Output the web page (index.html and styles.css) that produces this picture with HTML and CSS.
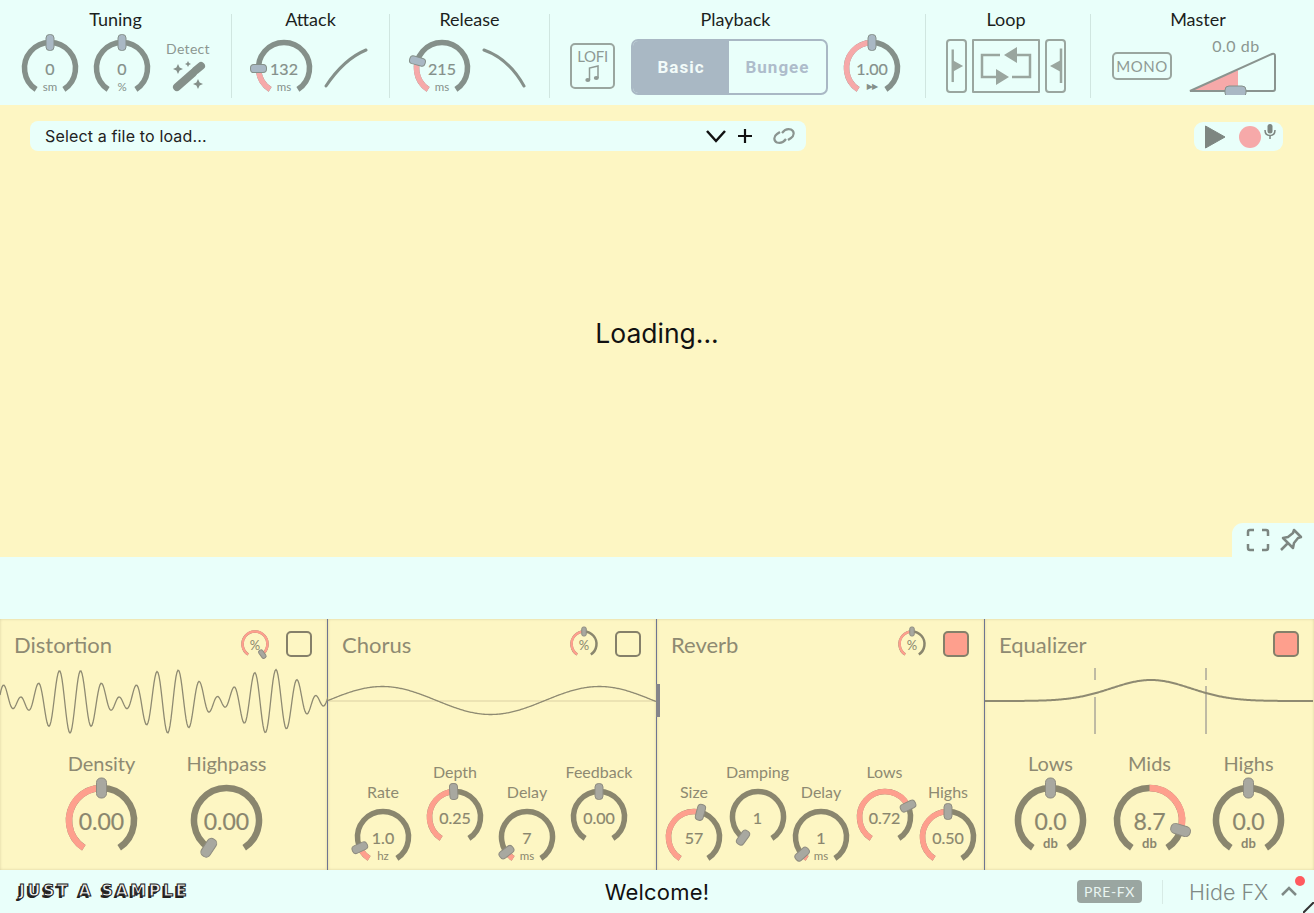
FILE: index.html
```html
<!DOCTYPE html>
<html>

<head>
    <title>Sampler</title>
    <link rel="stylesheet" href="styles.css">
</head>

<body>
    <div id="header">
        <div class="section tuning">
            <div class="section-title">Tuning</div>
            <div class="controls">
                <div class="knob sm" data-value="0" data-unit="sm" data-pos="0.5" data-from="0.5"></div>
                <div class="knob sm" data-value="0" data-unit="%" data-pos="0.5" data-from="0.5"></div>
                <div class="detect">
                    <div class="detect-label">Detect</div>
                    <svg width="36" height="32" viewBox="0 0 36 32">
                        <path d="M7 27 L23 13" class="wand" />
                        <path d="M25.500 10.500 L31 6" class="wand" />
                        <path class="star" d="M8 4 L9.600 7.400 L13 9 L9.600 10.600 L8 14 L6.400 10.600 L3 9 L6.400 7.400 Z" />
                        <path class="star" d="M18 1 L19 3 L21 4 L19 5 L18 7 L17 5 L15 4 L17 3 Z" />
                        <path class="star" d="M28 19 L29.600 22.400 L33 24 L29.600 25.600 L28 29 L26.400 25.600 L23 24 L26.400 22.400 Z" />
                    </svg>
                </div>
            </div>
        </div>
        <div class="sep"></div>
        <div class="section attack">
            <div class="section-title">Attack</div>
            <div class="controls">
                <div class="knob sm" data-value="132" data-unit="ms" data-pos="0.19" data-from="0"></div>
                <svg class="curve" width="44" height="40" viewBox="0 0 44 40">
                    <path d="M2 38 C12 23 25 9 42 2" />
                </svg>
            </div>
        </div>
        <div class="sep"></div>
        <div class="section release">
            <div class="section-title">Release</div>
            <div class="controls">
                <div class="knob sm" data-value="215" data-unit="ms" data-pos="0.248" data-from="0"></div>
                <svg class="curve" width="44" height="40" viewBox="0 0 44 40">
                    <path d="M2 2 C19 8 32 20 42 38" />
                </svg>
            </div>
        </div>
        <div class="sep"></div>
        <div class="section playback">
            <div class="section-title">Playback</div>
            <div class="controls">
                <div class="lofi">
                    <span>LOFI</span>
                    <svg width="15" height="19" viewBox="0 0 15 19">
                        <path d="M4.500 16 V4 L13 2 V14" class="note" />
                        <ellipse cx="2.800" cy="16" rx="2.500" ry="2" />
                        <ellipse cx="11.300" cy="14" rx="2.500" ry="2" />
                    </svg>
                </div>
                <div class="switch">
                    <div class="switch-on">Basic</div>
                    <div class="switch-off">Bungee</div>
                </div>
                <div class="knob sm speed" data-value="1.00" data-unit="▶▶" data-pos="0.5" data-from="0"></div>
            </div>
        </div>
        <div class="sep"></div>
        <div class="section loop">
            <div class="section-title">Loop</div>
            <div class="controls">
                <div class="loop-box loop-edge">
                    <svg width="18" height="50" viewBox="0 0 18 50">
                        <path d="M5 7.500 V42" class="loop-line" />
                        <path d="M5 19 L16 25 L5 31 Z" class="loop-fill" />
                    </svg>
                </div>
                <div class="loop-box loop-mid">
                    <svg width="64" height="50" viewBox="0 0 64 50">
                        <path d="M26 14 H8 V36 H23" class="loop-line" />
                        <path d="M22 28 L35 36 L22 44 Z" class="loop-fill" />
                        <path d="M38 36 H56 V14 H43" class="loop-line" />
                        <path d="M43 6 L30 14 L43 22 Z" class="loop-fill" />
                    </svg>
                </div>
                <div class="loop-box loop-edge">
                    <svg width="16" height="50" viewBox="0 0 16 50">
                        <path d="M13 7.500 V42" class="loop-line" />
                        <path d="M13 19 L2 25 L13 31 Z" class="loop-fill" />
                    </svg>
                </div>
            </div>
        </div>
        <div class="sep"></div>
        <div class="section master">
            <div class="section-title">Master</div>
            <div class="controls">
                <div class="mono">MONO</div>
                <div class="fader">
                    <div class="fader-label">0.0 db</div>
                    <svg width="88" height="44" viewBox="0 0 88 44">
                        <path d="M1 40 L49 40 L49 19 Z" class="fader-pink" />
                        <path d="M1 40 L83 3 Q86 2 86 5 V38 Q86 40 84 40 Z" class="fader-line" />
                        <rect x="36" y="35" width="21" height="11" rx="4" class="fader-handle" />
                    </svg>
                </div>
            </div>
        </div>
    </div>

    <div id="screen">
        <div class="file-bar">
            <div class="file-name">Select a file to load...</div>
            <svg class="chevron" width="22" height="14" viewBox="0 0 22 14">
                <path d="M2 2 L11 12 L20 2" />
            </svg>
            <svg class="plus" width="18" height="18" viewBox="0 0 18 18">
                <path d="M9 2 V16 M2 9 H16" />
            </svg>
            <svg class="link" width="24" height="18" viewBox="0 0 24 18">
                <path d="M10 6 C13 2 16 1.500 19 2.500 C23 4.500 22 9 19 11 L16 13" />
                <path d="M14 12 C11 16 8 16.500 5 15.500 C1 13.500 2 9 5 7 L8 5" />
            </svg>
        </div>
        <div class="transport">
            <svg width="22" height="24" viewBox="0 0 22 24">
                <path d="M1.500 1 L21 12 L1.500 23 Z" class="play" />
            </svg>
            <div class="rec"></div>
            <svg class="mic" width="12" height="16" viewBox="0 0 12 16">
                <rect x="3.500" y="0" width="5" height="9.500" rx="2.500" />
                <path d="M1 6 C1 10 3 11.500 6 11.500 C9 11.500 11 10 11 6 M6 11.500 V15" />
            </svg>
        </div>
        <div class="loading">Loading...</div>
    </div>

    <div id="spacer">
        <div class="view-tab">
            <svg width="24" height="24" viewBox="0 0 24 24">
                <path d="M2 8 V4 Q2 2 4 2 H8 M16 2 H20 Q22 2 22 4 V8 M22 16 V20 Q22 22 20 22 H16 M8 22 H4 Q2 22 2 20 V16" />
            </svg>
            <svg width="24" height="24" viewBox="0 0 24 24">
                <path d="M15 2 L22 9 L19 10 L15 15 L14 20 L4 10 L9 9 L14 5 Z M8.500 15.500 L2 22" />
            </svg>
        </div>
    </div>

    <div id="fx">
        <div class="panel">
            <div class="panel-head">
                <div class="panel-title">Distortion</div>
                <div class="knob mix" data-value="%" data-pos="0.99" data-from="0"></div>
                <div class="toggle"></div>
            </div>
            <svg class="wave" id="wave-distortion" width="328" height="72" viewBox="0 0 328 72"></svg>
            <div class="knob-row distortion-row">
                <div class="knob-col">
                    <div class="knob-label big-label">Density</div>
                    <div class="knob lg" data-value="0.00" data-pos="0.5" data-from="0"></div>
                </div>
                <div class="knob-col">
                    <div class="knob-label big-label">Highpass</div>
                    <div class="knob lg" data-value="0.00" data-pos="0" data-from="0"></div>
                </div>
            </div>
        </div>
        <div class="panel">
            <div class="panel-head">
                <div class="panel-title">Chorus</div>
                <div class="knob mix" data-value="%" data-pos="0.5" data-from="0"></div>
                <div class="toggle"></div>
            </div>
            <svg class="wave" id="wave-chorus" width="328" height="72" viewBox="0 0 328 72"></svg>
            <div class="knob-row chorus-row">
                <div class="knob-col">
                    <div class="knob-label">Rate</div>
                    <div class="knob sm" data-value="1.0" data-unit="hz" data-pos="0.11" data-from="0"></div>
                </div>
                <div class="knob-col raised">
                    <div class="knob-label">Depth</div>
                    <div class="knob sm" data-value="0.25" data-pos="0.49" data-from="0"></div>
                </div>
                <div class="knob-col">
                    <div class="knob-label">Delay</div>
                    <div class="knob sm" data-value="7" data-unit="ms" data-pos="0.07" data-from="0"></div>
                </div>
                <div class="knob-col raised">
                    <div class="knob-label">Feedback</div>
                    <div class="knob sm" data-value="0.00" data-pos="0.5" data-from="0.5"></div>
                </div>
            </div>
        </div>
        <div class="panel">
            <div class="grip"></div>
            <div class="panel-head">
                <div class="panel-title">Reverb</div>
                <div class="knob mix" data-value="%" data-pos="0.5" data-from="0"></div>
                <div class="toggle on"></div>
            </div>
            <div class="wave"></div>
            <div class="knob-row reverb-row">
                <div class="knob-col">
                    <div class="knob-label">Size</div>
                    <div class="knob sm" data-value="57" data-pos="0.55" data-from="0"></div>
                </div>
                <div class="knob-col raised">
                    <div class="knob-label">Damping</div>
                    <div class="knob sm" data-value="1" data-pos="0.01" data-from="0"></div>
                </div>
                <div class="knob-col">
                    <div class="knob-label">Delay</div>
                    <div class="knob sm" data-value="1" data-unit="ms" data-pos="0.05" data-from="0"></div>
                </div>
                <div class="knob-col raised">
                    <div class="knob-label">Lows</div>
                    <div class="knob sm" data-value="0.72" data-pos="0.72" data-from="0"></div>
                </div>
                <div class="knob-col">
                    <div class="knob-label">Highs</div>
                    <div class="knob sm" data-value="0.50" data-pos="0.5" data-from="0"></div>
                </div>
            </div>
        </div>
        <div class="panel">
            <div class="panel-head">
                <div class="panel-title">Equalizer</div>
                <div class="toggle on"></div>
            </div>
            <svg class="wave" id="wave-eq" width="328" height="72" viewBox="0 0 328 72"></svg>
            <div class="knob-row eq-row">
                <div class="knob-col">
                    <div class="knob-label big-label">Lows</div>
                    <div class="knob lg" data-value="0.0" data-unit="db" data-pos="0.5" data-from="0.5"></div>
                </div>
                <div class="knob-col">
                    <div class="knob-label big-label">Mids</div>
                    <div class="knob lg" data-value="8.7" data-unit="db" data-pos="0.864" data-from="0.5"></div>
                </div>
                <div class="knob-col">
                    <div class="knob-label big-label">Highs</div>
                    <div class="knob lg" data-value="0.0" data-unit="db" data-pos="0.5" data-from="0.5"></div>
                </div>
            </div>
        </div>
    </div>

    <div id="footer">
        <div class="brand">JUST A SAMPLE</div>
        <div class="welcome">Welcome!</div>
        <div class="footer-right">
            <div class="pre-fx">PRE-FX</div>
            <div class="footer-sep"></div>
            <div class="hide-fx">Hide FX</div>
            <svg class="hide-chevron" width="18" height="12" viewBox="0 0 18 12">
                <path d="M2 10 L9 3 L16 10" />
            </svg>
            <div class="dot"></div>
        </div>
        <svg class="resize" width="11" height="11" viewBox="0 0 11 11">
            <path d="M0 11 L11 0" />
        </svg>
    </div>

    <script src="app.js"></script>
</body>

</html>
```

FILE: styles.css
```css
body {
    font-family: "Inter", sans-serif;
    margin: 0;
    padding: 0;
    width: 1314px;
    height: 913px;
    overflow: hidden;
    display: flex;
    flex-direction: column;
    background-color: #e9fffa;
    color: #111;
}

/* header */

#header {
    height: 105px;
    display: flex;
    flex-shrink: 0;
}

.section {
    box-sizing: border-box;
    height: 105px;
}

.section-title {
    font-family: "Lato", sans-serif;
    font-size: 18px;
    height: 28px;
    line-height: 28px;
    padding-top: 5px;
    text-align: center;
    color: #1c1f1e;
}

.controls {
    display: flex;
    align-items: center;
    height: 60px;
    margin-top: 3px;
}

.controls .knob {
    margin-top: 4px;
}

.sep {
    width: 1px;
    height: 84px;
    margin-top: 14px;
    background-color: #d0e6e0;
    flex-shrink: 0;
}

.tuning {
    width: 231px;
}

.tuning .controls {
    padding-left: 22px;
    gap: 16px;
}

.attack {
    width: 157px;
}

.release {
    width: 159px;
}

.attack .controls,
.release .controls {
    padding-left: 24px;
    gap: 12px;
}

.playback {
    width: 375px;
}

.playback .section-title {
    padding-right: 4px;
}

.playback .controls {
    padding-left: 20px;
    gap: 16px;
}

.loop {
    width: 164px;
}

.loop .section-title {
    padding-right: 4px;
}

.loop .controls {
    padding-left: 20px;
    gap: 5px;
}

.master {
    width: 223px;
}

.master .section-title {
    padding-right: 9px;
}

.master .controls {
    padding-left: 21px;
    gap: 17px;
}

.detect {
    width: 40px;
    display: flex;
    flex-direction: column;
    align-items: center;
    margin-left: 2px;
    margin-top: -1px;
}

.detect-label {
    font-family: "Lato", sans-serif;
    font-size: 14px;
    letter-spacing: 0.3px;
    color: #8c9791;
    margin-bottom: 3px;
}

.wand {
    fill: none;
    stroke: #85908a;
    stroke-width: 8;
    stroke-linecap: round;
}

.star {
    fill: #85908a;
}

.curve {
    margin-top: 3px;
}

.curve path {
    fill: none;
    stroke: #85908a;
    stroke-width: 3;
    stroke-linecap: round;
}

.lofi {
    box-sizing: border-box;
    width: 45px;
    height: 46px;
    border: 2px solid #9aa69f;
    border-radius: 5px;
    display: flex;
    flex-direction: column;
    align-items: center;
    font-family: "Lato", sans-serif;
    font-size: 15px;
    letter-spacing: -0.3px;
    line-height: 16px;
    padding-top: 3px;
    color: #8f9a94;
}

.lofi ellipse {
    fill: #8f9a94;
}

.note {
    fill: none;
    stroke: #8f9a94;
    stroke-width: 1.500;
}

.switch {
    box-sizing: border-box;
    width: 197px;
    height: 56px;
    margin-top: 2px;
    border: 2px solid #a9b8c4;
    border-radius: 7px;
    display: flex;
    overflow: hidden;
    font-weight: 700;
    font-size: 17px;
    letter-spacing: 1px;
    line-height: 52px;
    text-align: center;
    font-family: "Roboto", sans-serif;
}

.switch-on {
    width: 96px;
    background-color: #a9b8c4;
    color: #f2fbf9;
}

.switch-off {
    flex: 1;
    color: #aebccb;
}

.loop-box {
    box-sizing: border-box;
    height: 54px;
    border: 2px solid #9aa69f;
    border-radius: 3px;
    display: flex;
    align-items: center;
    justify-content: center;
}

.loop-edge {
    width: 21px;
    border-radius: 4px;
}

.loop-mid {
    width: 68px;
    border-radius: 1px;
}

.loop-line {
    fill: none;
    stroke: #9aa69f;
    stroke-width: 2.500;
}

.loop-fill {
    fill: #9aa69f;
}

.mono {
    box-sizing: border-box;
    width: 60px;
    height: 28px;
    border: 2px solid #9aa69f;
    border-radius: 5px;
    font-family: "Lato", sans-serif;
    font-size: 15px;
    letter-spacing: 0.5px;
    line-height: 24px;
    text-align: center;
    color: #8f9a94;
}

.fader {
    display: flex;
    flex-direction: column;
    align-items: center;
    height: 60px;
    margin-top: 4px;
}

.fader svg {
    margin-top: -3px;
}

.fader-label {
    font-family: "Lato", sans-serif;
    font-size: 16px;
    letter-spacing: 0.5px;
    line-height: 16px;
    color: #8c9791;
    padding-left: 6px;
}

.fader-pink {
    fill: #f6a9a9;
}

.fader-line {
    fill: none;
    stroke: #8a948f;
    stroke-width: 2;
}

.fader-handle {
    fill: #a9b8c4;
    stroke: #85908a;
    stroke-width: 1;
}

/* screen */

#screen {
    height: 452px;
    flex-shrink: 0;
    background-color: #fdf6c3;
    position: relative;
    display: flex;
    align-items: center;
    justify-content: center;
}

.file-bar {
    position: absolute;
    left: 30px;
    top: 16px;
    width: 776px;
    height: 30px;
    box-sizing: border-box;
    background-color: #e9fffa;
    border-radius: 8px;
    display: flex;
    align-items: center;
    padding-left: 15px;
    padding-right: 10px;
}

.file-name {
    flex: 1;
    font-size: 16px;
    letter-spacing: 0.15px;
    color: #222;
}

.chevron {
    margin-right: 9px;
}

.chevron path {
    fill: none;
    stroke: #111;
    stroke-width: 2.500;
}

.plus path {
    fill: none;
    stroke: #111;
    stroke-width: 2.200;
}

.link {
    margin-left: 18px;
}

.link path {
    fill: none;
    stroke: #8b9590;
    stroke-width: 2.200;
}

.transport {
    position: absolute;
    left: 1194px;
    top: 17px;
    width: 89px;
    height: 29px;
    background-color: #e9fffa;
    border-radius: 9px;
    display: flex;
    align-items: center;
    padding-left: 10px;
    box-sizing: border-box;
}

.play {
    fill: #7d8681;
    stroke: #7d8681;
    stroke-linejoin: round;
}

.rec {
    width: 22px;
    height: 22px;
    margin-left: 13px;
    border-radius: 50%;
    background-color: #f6a9a9;
}

.mic {
    margin-left: 3px;
    margin-top: -9px;
}

.mic rect {
    fill: #7d8681;
}

.mic path {
    fill: none;
    stroke: #7d8681;
    stroke-width: 1.500;
}

.loading {
    font-size: 26.500px;
    margin-top: 4px;
}

#spacer {
    height: 62px;
    flex-shrink: 0;
    position: relative;
}

.view-tab {
    position: absolute;
    right: 0;
    top: -34px;
    width: 82px;
    height: 34px;
    box-sizing: border-box;
    background-color: #e9fffa;
    border-top-left-radius: 11px;
    display: flex;
    align-items: center;
    gap: 9px;
    padding-left: 14px;
}

.view-tab path {
    fill: none;
    stroke: #7d8681;
    stroke-width: 2.500;
    stroke-linejoin: round;
}

/* fx panels */

#fx {
    height: 251px;
    flex-shrink: 0;
    display: flex;
}

.panel {
    width: 328px;
    box-sizing: border-box;
    background-color: #fdf6c3;
    box-shadow: inset 0 0 3px #d8cfa0;
    border-right: 1px solid #6f7590;
    display: flex;
    flex-direction: column;
    position: relative;
}

.panel:nth-child(even) {
    width: 329px;
}

.panel:last-child {
    border-right: none;
}

.panel-head {
    height: 46px;
    box-sizing: border-box;
    padding: 4px 15px 0 14px;
    display: flex;
    align-items: center;
    gap: 17px;
}

.panel-title {
    font-family: "Lato", sans-serif;
    font-size: 22px;
    color: #8e8a72;
    margin-right: auto;
}

.toggle {
    box-sizing: border-box;
    width: 26px;
    height: 26px;
    border: 2.500px solid #85806a;
    border-radius: 5px;
}

.toggle.on {
    background-color: #fe9f8d;
}

.wave {
    height: 72px;
    display: block;
    flex-shrink: 0;
}

.wave path {
    fill: none;
    stroke: #8e8a72;
    stroke-width: 1.300;
}

.wave .baseline {
    stroke: #e6dcae;
    stroke-width: 1.500;
}

.wave .eq-mark {
    stroke: #b9b4a0;
    stroke-width: 1.800;
}

.wave .eq-line {
    stroke-width: 2;
}

.grip {
    position: absolute;
    left: -1px;
    top: 65px;
    width: 4px;
    height: 33px;
    background-color: #85858a;
}

.knob-row {
    margin-top: auto;
    display: flex;
    align-items: flex-end;
}

.distortion-row {
    padding-left: 66px;
    padding-bottom: 14px;
    gap: 54px;
}

.chorus-row {
    padding-left: 27px;
    padding-bottom: 5px;
    gap: 16px;
}

.reverb-row {
    padding-left: 9px;
    padding-bottom: 5px;
    gap: 7.500px;
}

.eq-row {
    padding-left: 30px;
    padding-bottom: 14px;
    gap: 28px;
}

.knob-col {
    width: 56px;
    display: flex;
    flex-direction: column;
    align-items: center;
}

.distortion-row .knob-col,
.eq-row .knob-col {
    width: 71px;
}

.raised {
    margin-bottom: 20px;
}

.knob-label {
    font-family: "Lato", sans-serif;
    font-size: 16px;
    line-height: 20px;
    color: #8e8a72;
    white-space: nowrap;
    margin-bottom: 7px;
}

.big-label {
    font-size: 20px;
    line-height: 24px;
    margin-bottom: 10px;
}

/* knobs are drawn by app.js */

.knob {
    position: relative;
    flex-shrink: 0;
    --track: #85908a;
    --handle: #a9b8c4;
    --handle-edge: #85908a;
    --pink: #f6a9a9;
    --text: #85908a;
}

#fx .knob {
    --track: #8a866e;
    --handle: #a8a8a0;
    --handle-edge: #8e8c80;
    --pink: #fe9f8d;
    --text: #8a866e;
}

.knob.sm {
    width: 56px;
    height: 56px;
}

.knob.lg {
    width: 71px;
    height: 71px;
}

.knob.mix {
    width: 28px;
    height: 28px;
}

.knob svg {
    position: absolute;
    left: 0;
    top: 0;
    overflow: visible;
}

.knob .track {
    fill: none;
    stroke: var(--track);
}

.knob .amount {
    fill: none;
    stroke: var(--pink);
}

.knob .handle {
    fill: var(--handle);
    stroke: var(--handle-edge);
    stroke-width: 1;
}

.knob-value {
    position: absolute;
    left: 0;
    right: 0;
    top: 50%;
    margin-top: -10px;
    height: 20px;
    line-height: 22px;
    text-align: center;
    font-family: "Lato", sans-serif;
    font-size: 16px;
    -webkit-text-stroke: 0.2px var(--text);
    color: var(--text);
}

.knob-unit {
    position: absolute;
    left: 0;
    right: 0;
    bottom: 3px;
    text-align: center;
    font-family: "Lato", sans-serif;
    font-size: 11.500px;
    line-height: 12px;
    color: var(--text);
}

.speed .knob-unit {
    font-size: 8px;
    letter-spacing: -1px;
    font-family: "DejaVu Sans", sans-serif;
}

.lg .knob-value {
    font-size: 23px;
    margin-top: -11px;
}

.lg .knob-unit {
    font-size: 13px;
    font-weight: 700;
    bottom: 7px;
}

.mix .knob-value {
    font-size: 13px;
    -webkit-text-stroke: 0;
}

/* footer */

#footer {
    height: 43px;
    flex-shrink: 0;
    position: relative;
    display: flex;
    align-items: center;
    justify-content: center;
}

.brand {
    position: absolute;
    left: 19px;
    top: 12px;
    font-family: "DejaVu Sans", sans-serif;
    font-weight: 700;
    font-size: 16px;
    letter-spacing: 2.500px;
    line-height: 18px;
    color: #f4f4f0;
    -webkit-text-stroke: 1px #222;
    text-shadow: -2px 2px 0 #222;
}

.welcome {
    font-size: 22px;
    letter-spacing: 0.2px;
}

.footer-right {
    position: absolute;
    right: 0;
    top: 0;
    height: 43px;
    width: 237px;
    display: flex;
    align-items: center;
}

.pre-fx {
    width: 65px;
    height: 23px;
    line-height: 23px;
    text-align: center;
    background-color: #9aa6a1;
    color: #e9f5f1;
    border-radius: 4px;
    font-family: "Lato", sans-serif;
    font-size: 14px;
    letter-spacing: 0.6px;
}

.footer-sep {
    width: 1px;
    height: 24px;
    margin-left: 20px;
    background-color: #d7ebe5;
}

.hide-fx {
    margin-left: 26px;
    font-size: 21.500px;
    font-weight: 300;
    color: #7f8a86;
}

.hide-chevron {
    margin-left: 12px;
    margin-top: -2px;
}

.hide-chevron path {
    fill: none;
    stroke: #7f8a86;
    stroke-width: 2.500;
}

.dot {
    position: absolute;
    right: 9px;
    top: 6px;
    width: 10px;
    height: 10px;
    border-radius: 50%;
    background-color: #ff5a5f;
}

.resize {
    position: absolute;
    right: 0;
    bottom: 0;
}

.resize path {
    fill: none;
    stroke: #333;
    stroke-width: 2;
}
```

FILE: app.js
```js
// Size of each knob type: radius, stroke, handle width, handle length
var knobSizes = {
    sm: { r: 25.5, stroke: 5.5, hw: 8, hl: 16 },
    lg: { r: 32.5, stroke: 6.5, hw: 10, hl: 20 },
    mix: { r: 12.5, stroke: 2.5, hw: 4.5, hl: 9 }
};

var SWEEP = 147; // degrees each side of the top

function point(c, r, deg) {
    var rad = deg * Math.PI / 180;
    return (c + r * Math.sin(rad)).toFixed(2) + ' ' + (c - r * Math.cos(rad)).toFixed(2);
}

function arc(c, r, from, to) {
    var large = to - from > 180 ? 1 : 0;
    return 'M' + point(c, r, from) + ' A' + r + ' ' + r + ' 0 ' + large + ' 1 ' + point(c, r, to);
}

function toAngle(pos) {
    return -SWEEP + pos * SWEEP * 2;
}

function buildKnob(el) {
    var type = el.classList.contains('lg') ? 'lg' : el.classList.contains('mix') ? 'mix' : 'sm';
    var size = knobSizes[type];
    var box = el.offsetWidth;
    var c = box / 2;
    var pos = parseFloat(el.dataset.pos);
    var from = parseFloat(el.dataset.from);
    var angle = toAngle(pos);

    var svg = '<svg width="' + box + '" height="' + box + '" viewBox="0 0 ' + box + ' ' + box + '">';
    svg += '<path class="track" stroke-width="' + size.stroke + '" d="' + arc(c, size.r, -SWEEP, SWEEP) + '"/>';
    if (pos !== from) {
        svg += '<path class="amount" stroke-width="' + size.stroke + '" d="' +
            arc(c, size.r, toAngle(Math.min(pos, from)), toAngle(Math.max(pos, from))) + '"/>';
    }
    svg += '<rect class="handle" x="' + (c - size.hw / 2) + '" y="' + (c - size.r - size.hl / 2) +
        '" width="' + size.hw + '" height="' + size.hl + '" rx="' + (size.hw / 2 - 0.5) +
        '" transform="rotate(' + angle + ' ' + c + ' ' + c + ')"/>';
    svg += '</svg>';
    el.innerHTML = svg;

    var value = document.createElement('div');
    value.classList.add('knob-value');
    value.textContent = el.dataset.value;
    el.appendChild(value);

    if (el.dataset.unit) {
        var unit = document.createElement('div');
        unit.classList.add('knob-unit');
        unit.textContent = el.dataset.unit;
        el.appendChild(unit);
    }
}

function addPath(svg, d, className) {
    var path = document.createElementNS('http://www.w3.org/2000/svg', 'path');
    path.setAttribute('d', d);
    if (className) {
        path.setAttribute('class', className);
    }
    svg.appendChild(path);
}

function curve(fn) {
    var d = '';
    for (var x = 0; x <= 328; x++) {
        d += (x === 0 ? 'M' : 'L') + x + ' ' + fn(x).toFixed(2) + ' ';
    }
    return d;
}

// Two close sines give the beating shape of the distortion wave
function drawDistortion() {
    addPath(document.getElementById('wave-distortion'), curve(function (x) {
        var t = x - 70;
        return 36 + 18 * Math.cos(2 * Math.PI * 0.0511 * t) + 14 * Math.cos(2 * Math.PI * 0.0411 * t);
    }));
}

function drawChorus() {
    var svg = document.getElementById('wave-chorus');
    addPath(svg, 'M0 36 H328', 'baseline');
    addPath(svg, curve(function (x) {
        return 35.5 - 14 * Math.sin(2 * Math.PI * x / 217);
    }));
}

function drawEq() {
    var svg = document.getElementById('wave-eq');
    addPath(svg, 'M110 3 V15 M110 32 V69 M221 3 V15 M221 21 V69', 'eq-mark');
    addPath(svg, curve(function (x) {
        var d = (x - 166) / 56;
        return 36 - 21 * Math.exp(-d * d);
    }), 'eq-line');
}

document.querySelectorAll('.knob').forEach(buildKnob);
drawDistortion();
drawChorus();
drawEq();
```
